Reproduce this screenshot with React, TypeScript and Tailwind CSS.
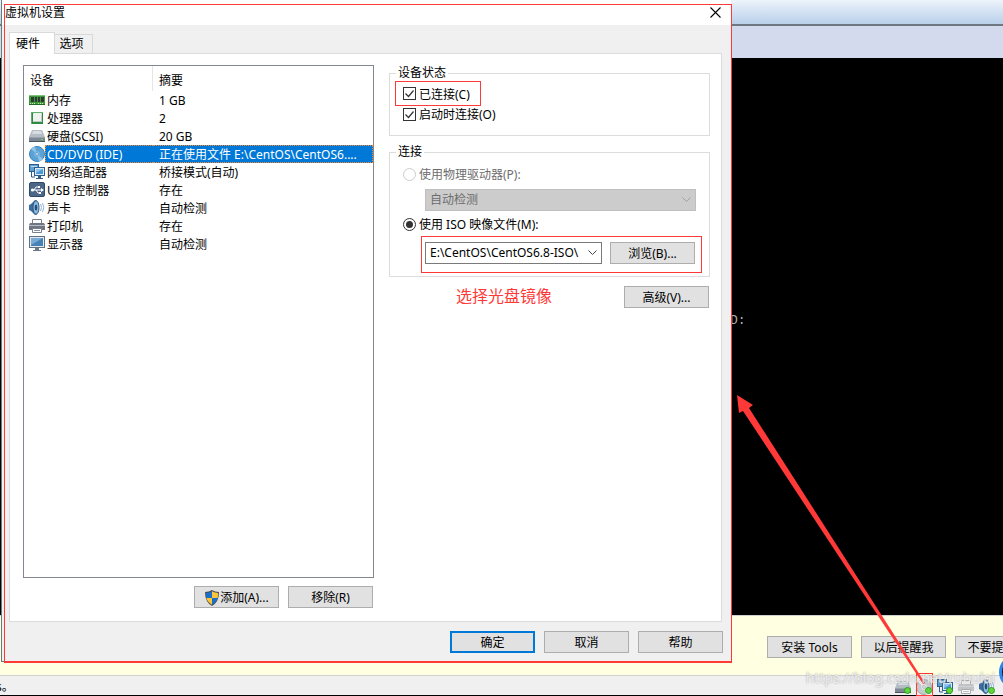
import type { ComponentType, ReactNode } from "react";
import clsx from "clsx";

function MemoryIcon() {
    return (
        <svg viewBox="0 0 16 16" className="size-4 shrink-0">
            <path d="M0 3h16v9H0z" fill="#3f9a3c" />
            <path d="M0 3h16v1H0z" fill="#7cc277" />
            <path d="M2 5h3v5H2zM6 5h2v5H6zM9 5h2v5H9zM12 5h3v5h-3z" fill="#2e3a33" />
            <path d="M0 12h16v1H0z" fill="#1f6a26" />
            <path d="M1 11h1v1H1zM3 11h1v1H3zM5 11h1v1H5zM9 11h1v1H9zM11 11h1v1h-1zM13 11h1v1h-1z" fill="#d9e8b0" />
        </svg>
    );
}

function CpuIcon() {
    return (
        <svg viewBox="0 0 16 16" className="size-4 shrink-0">
            <rect x="2" y="2" width="12" height="12" fill="#2f8a46" />
            <path d="M2 2h12v1H3v11H2z" fill="#5cb06c" />
            <rect x="4" y="3" width="9" height="9" rx="1" fill="#f0f2f0" />
            <path d="M5 12h7l1-1V5l-1-1v7H4z" fill="#c3cbc4" />
        </svg>
    );
}

function DiskIcon() {
    return (
        <svg viewBox="0 0 16 16" className="size-4 shrink-0">
            <path d="M3 2h10l3 7H0z" fill="#b4bcc5" />
            <path d="M4 3h8l1 3H3z" fill="#d6dce2" />
            <path d="M0 9h16v4H0z" fill="#7d8894" />
            <path d="M0 9h16v1H0z" fill="#98a3ae" />
            <path d="M0 13h16v1H0z" fill="#4b5662" />
            <path d="M12 11h2v1h-2z" fill="#6fdc4c" />
        </svg>
    );
}

function CdIcon({ gray = false }: { gray?: boolean }) {
    return (
        <svg viewBox="0 0 16 16" className="size-4 shrink-0">
            <circle cx="8" cy="8" r="7.5" fill={gray ? "#c6cacd" : "#5ba3d6"} stroke={gray ? "#a3a8ac" : "#3c83bb"} />
            <path d="M8 8L2 3a8 8 0 0 1 4-2.500zM8 8l6 5a8 8 0 0 1-4 2.500z" fill={gray ? "#f1f3f4" : "#8fc4e8"} />
            <circle cx="8" cy="8" r="3" fill={gray ? "#dfe2e4" : "#79b5df"} />
            <circle cx="8" cy="8" r="1.3" fill="#fff" stroke={gray ? "#8d9296" : "#3c83bb"} strokeWidth=".6" />
        </svg>
    );
}

function NetworkIcon() {
    return (
        <svg viewBox="0 0 16 16" className="size-4 shrink-0">
            <rect x="0.5" y="0.5" width="9" height="7" fill="#5d9fd0" stroke="#2c5f8d" />
            <path d="M2 2h6v1H2z" fill="#b6dbf3" />
            <path d="M2.500 8v5H6" fill="none" stroke="#2c5f8d" />
            <rect x="5.500" y="3.500" width="10" height="8" fill="#dce9f3" stroke="#2c5f8d" />
            <rect x="7" y="5" width="7" height="5" fill="#4b9ad8" />
            <path d="M7 5h7L7 9z" fill="#8cc5ee" />
            <path d="M9 12h3v2h2v1H7v-1h2z" fill="#315d86" />
        </svg>
    );
}

function UsbIcon() {
    return (
        <svg viewBox="0 0 16 16" className="size-4 shrink-0">
            <rect x="0.5" y="0.5" width="15" height="14" rx="1.500" fill="#4c6687" stroke="#304967" />
            <path d="M3 8h10M5 8l2-3h2M7 8l2 3h2" fill="none" stroke="#fff" strokeWidth="1" />
            <circle cx="3.500" cy="8" r="1.600" fill="#fff" />
            <path d="M12 6l3 2-3 2zM9 4h2v2H9zM10 10h2v2h-2z" fill="#fff" />
        </svg>
    );
}

function SoundIcon() {
    return (
        <svg viewBox="0 0 16 16" className="size-4 shrink-0">
            <path d="M0 5l2-1 4-4 2 1v13l-2 1-4-4-2-1z" fill="#3b6e9e" />
            <ellipse cx="7" cy="7.500" rx="3" ry="6.800" fill="#8dbbe0" stroke="#29557f" />
            <ellipse cx="7" cy="7.500" rx="1.300" ry="3" fill="#274c70" />
            <path d="M11.500 4q2 3.500 0 7M13.500 3q2.500 4.500 0 9" fill="none" stroke="#8fb3d2" />
        </svg>
    );
}

function PrinterIcon({ gray = false }: { gray?: boolean }) {
    return (
        <svg viewBox="0 0 16 16" className={clsx("size-4 shrink-0", gray && "opacity-60")}>
            <path d="M3.500 1.500h9v5h-9z" fill="#fff" stroke="#7b8088" />
            <path d="M1 5h14l1 2v5H0V7z" fill={gray ? "#a3a6aa" : "#6f7785"} />
            <path d="M0 7h16v1H0z" fill="#b9bec6" />
            <path d="M3.500 10.500h9v4h-9z" fill="#fff" stroke="#7b8088" />
            <path d="M5 12h6v1H5z" fill={gray ? "#a3a6aa" : "#8690b8"} />
        </svg>
    );
}

function DisplayIcon() {
    return (
        <svg viewBox="0 0 16 16" className="size-4 shrink-0">
            <rect x="0.5" y="0.5" width="15" height="11" fill="#e3e9ee" stroke="#60707f" />
            <rect x="2" y="2" width="12" height="8" fill="#4681b5" />
            <path d="M2 2h12L2 9z" fill="#77aad5" />
            <path d="M6 12h4v2h2v1H4v-1h2z" fill="#6b7a88" />
        </svg>
    );
}

function ShieldIcon() {
    return (
        <svg viewBox="0 0 16 16" className="size-4 shrink-0">
            <path d="M8 0q3 2 7 2 0 10-7 14Q1 12 1 2q4 0 7-2z" fill="#4a4f57" />
            <path d="M8 1.300V8H2.300Q2 6 2 3q3 0 6-1.700z" fill="#1c6fc9" />
            <path d="M8 1.300V8h5.700Q14 6 14 3q-3 0-6-1.700z" fill="#fcc43a" />
            <path d="M8 8v6.800Q3.500 12 2.300 8z" fill="#fcc43a" />
            <path d="M8 8v6.800q4.500-2.800 5.700-6.800z" fill="#1c6fc9" />
        </svg>
    );
}

interface Device {
    name: string;
    summary: string;
    icon: ComponentType;
    selected?: boolean;
}

const devices: Device[] = [
    { name: "内存", summary: "1 GB", icon: MemoryIcon },
    { name: "处理器", summary: "2", icon: CpuIcon },
    { name: "硬盘(SCSI)", summary: "20 GB", icon: DiskIcon },
    { name: "CD/DVD (IDE)", summary: "正在使用文件 E:\\CentOS\\CentOS6....", icon: CdIcon, selected: true },
    { name: "网络适配器", summary: "桥接模式(自动)", icon: NetworkIcon },
    { name: "USB 控制器", summary: "存在", icon: UsbIcon },
    { name: "声卡", summary: "自动检测", icon: SoundIcon },
    { name: "打印机", summary: "存在", icon: PrinterIcon },
    { name: "显示器", summary: "自动检测", icon: DisplayIcon },
];

function Button({ children, primary = false }: { children: ReactNode; primary?: boolean }) {
    return (
        <button
            type="button"
            className={clsx(
                "flex h-[22px] w-[85px] shrink-0 items-center justify-center whitespace-nowrap bg-[#e1e1e1] pt-[2px]",
                primary ? "border-2 border-[#0078d7]" : "border border-[#adadad]",
            )}
        >
            {children}
        </button>
    );
}

function CheckBox({ label, className }: { label: string; className?: string }) {
    return (
        <label className={clsx("flex items-center gap-[3px]", className)}>
            <span className="grid size-[13px] place-items-center">
                <input
                    type="checkbox"
                    defaultChecked
                    className="peer col-start-1 row-start-1 size-[13px] appearance-none border border-[#333] bg-white"
                />
                <svg
                    viewBox="0 0 13 13"
                    className="pointer-events-none invisible col-start-1 row-start-1 size-[13px] peer-checked:visible"
                >
                    <path d="M2.500 6.500l3 3 5-6" fill="none" stroke="#333" strokeWidth="1.200" />
                </svg>
            </span>
            <span className="pt-[2px]">{label}</span>
        </label>
    );
}

function Radio({ label, checked, disabled }: { label: string; checked?: boolean; disabled?: boolean }) {
    return (
        <label className={clsx("flex h-4 items-center gap-[3px] pl-[13px]", disabled && "text-[#6d6d6d]")}>
            <input
                type="radio"
                name="source"
                defaultChecked={checked}
                disabled={disabled}
                className="size-[13px] appearance-none rounded-full border border-[#333] bg-white bg-clip-content p-[2px] checked:bg-[#333] disabled:border-[#ccc]"
            />
            <span className="pt-[2px]">{label}</span>
        </label>
    );
}

function Select({ value, label, disabled, className }: { value: string; label: string; disabled?: boolean; className?: string }) {
    return (
        <div
            className={clsx(
                "grid h-[22px] items-center border",
                disabled ? "border-[#bfbfbf] bg-[#ccc] text-[#6d6d6d]" : "border-[#7a7a7a] bg-white",
                className,
            )}
        >
            <select
                aria-label={label}
                disabled={disabled}
                className="col-start-1 row-start-1 h-5 w-full appearance-none bg-transparent pr-4 pl-1 opacity-100"
            >
                <option>{value}</option>
            </select>
            <svg
                viewBox="0 0 9 6"
                className="pointer-events-none col-start-1 row-start-1 mr-1 h-[6px] w-[9px] justify-self-end"
            >
                <path d="M.5 .5l4 4 4-4" fill="none" stroke={disabled ? "#a0a0a0" : "#444"} />
            </svg>
        </div>
    );
}

function DeviceTable() {
    return (
        <div className="h-[513px] border border-[#828790] bg-white">
            <table className="w-full table-fixed border-separate border-spacing-0 text-left">
                <thead>
                    <tr className="h-[25px]">
                        <th className="w-[129px] border-r border-[#e5e5e5] p-0 pt-1 pl-[6px] font-normal">设备</th>
                        <th className="p-0 pt-1 pl-[6px] font-normal">摘要</th>
                    </tr>
                </thead>
                <tbody>
                    {devices.map(({ name, summary, icon: Icon, selected }) => (
                        <tr key={name} className="h-[18px]">
                            <td className="p-0">
                                <div className="flex h-[18px] items-center pl-[5px]">
                                    <Icon />
                                    <span
                                        className={clsx(
                                            "h-[18px] flex-1 border-y border-l border-dotted pl-px leading-[18px] whitespace-nowrap",
                                            selected ? "border-[#ff8728] bg-[#0078d7] text-white" : "border-transparent",
                                        )}
                                    >
                                        {name}
                                    </span>
                                </div>
                            </td>
                            <td className="p-0">
                                <div
                                    className={clsx(
                                        "h-[18px] overflow-hidden border-y border-r border-dotted pl-[6px] leading-[18px] whitespace-nowrap",
                                        selected ? "border-[#ff8728] bg-[#0078d7] text-white" : "border-transparent",
                                    )}
                                >
                                    {summary}
                                </div>
                            </td>
                        </tr>
                    ))}
                </tbody>
            </table>
        </div>
    );
}

function SettingsDialog() {
    return (
        <section className="absolute top-0 left-px w-[730px] border-b border-l border-[#6b7b78] bg-[#f0f0f0]">
            <header className="flex h-[25px] items-center justify-between bg-white pr-[10px] pl-[3px]">
                <h1>虚拟机设置</h1>
                <button type="button" aria-label="关闭">
                    <svg viewBox="0 0 11 11" className="size-[11px]">
                        <path d="M.5 .5l10 10M10.500 .5l-10 10" stroke="#000" strokeWidth="1.100" />
                    </svg>
                </button>
            </header>

            <div className="pt-[7px] pr-[9px] pl-[7px]">
                <nav className="-mb-px flex items-end">
                    <button type="button" className="relative h-[22px] w-[46px] border border-b-0 border-[#d9d9d9] bg-white pr-2">
                        硬件
                    </button>
                    <button type="button" className="h-5 w-[38px] border border-l-0 border-[#d9d9d9] pr-1">
                        选项
                    </button>
                </nav>

                <div className="flex gap-[15px] border border-[#dcdcdc] bg-white pt-[11px] pr-[11px] pb-[13px] pl-[13px]">
                    <div className="w-[351px]">
                        <DeviceTable />
                        <div className="mt-2 flex justify-end gap-[9px] pr-px">
                            <Button>
                                <ShieldIcon />
                                添加(A)...
                            </Button>
                            <Button>移除(R)</Button>
                        </div>
                    </div>

                    <div className="min-w-0 flex-1">
                        <fieldset className="border border-[#dcdcdc] pb-[13px]">
                            <legend className="ml-[6px] h-4 px-[2px] leading-4">设备状态</legend>
                            <CheckBox label="已连接(C)" className="ml-[5px] h-[25px] w-[86px] border border-[#ff3838] pl-[7px]" />
                            <CheckBox label="启动时连接(O)" className="ml-[13px] h-4" />
                        </fieldset>

                        <fieldset className="mt-2 border border-[#dcdcdc] pb-[3px]">
                            <legend className="ml-[6px] h-4 px-[2px] leading-4">连接</legend>
                            <div className="pt-[6px]">
                                <Radio label="使用物理驱动器(P):" disabled />
                            </div>
                            <Select label="物理驱动器" value="自动检测" disabled className="mt-[7px] mr-[13px] mb-[5px] ml-[35px]" />
                            <Radio label="使用 ISO 映像文件(M):" checked />
                            <div className="mt-1 mr-[7px] ml-[31px] flex h-[37px] items-center gap-2 border border-[#ff3838] pr-[6px] pb-[3px] pl-[3px]">
                                <Select label="ISO 映像文件" value="E:\CentOS\CentOS6.8-ISO\" className="min-w-0 flex-1" />
                                <Button>浏览(B)...</Button>
                            </div>
                        </fieldset>

                        <div className="mt-[9px] flex justify-between pr-px pl-[67px]">
                            <p className="text-base leading-5 text-[#ff3838]">选择光盘镜像</p>
                            <Button>高级(V)...</Button>
                        </div>
                    </div>
                </div>
            </div>

            <footer className="flex justify-end gap-[9px] pt-[9px] pr-2 pb-2">
                <Button primary>确定</Button>
                <Button>取消</Button>
                <Button>帮助</Button>
            </footer>
        </section>
    );
}

const statusIcons = [
    { id: "disk", icon: <DiskIcon />, active: true },
    { id: "cd", icon: <CdIcon gray />, active: true },
    { id: "network", icon: <NetworkIcon />, active: true },
    { id: "printer", icon: <PrinterIcon gray />, active: false },
    { id: "sound", icon: <SoundIcon />, active: true },
];

function VirtualMachine() {
    return (
        <main className="flex min-h-screen flex-col">
            <div className="h-[26px] border-b-2 border-[#6e7880] bg-linear-to-b from-[#edf3fb] to-[#b9d0ea]" />
            <div className="h-8 bg-[#d4daee]" />
            <div className="flex-1 bg-black pt-[255px] pl-[730px] font-['Liberation_Mono'] text-[13px] leading-4 text-[#b0b0b0]">
                D:
            </div>
            <div className="flex h-[60px] justify-end gap-[9px] overflow-hidden border-t border-[#d0d0d0] bg-[#ffffe1] pt-5">
                <Button>安装 Tools</Button>
                <Button>以后提醒我</Button>
                <div className="w-12">
                    <Button>不要提醒我</Button>
                </div>
            </div>
            <footer className="flex h-[21px] items-center justify-between border-t border-b border-t-[#d0d0d0] border-b-black bg-[#f0f0f0] pr-2">
                <span className="-ml-1 pt-[2px]">s。</span>
                <div className="flex gap-[5px] pt-[2px]">
                    {statusIcons.map(({ id, icon, active }) => (
                        <span key={id} className="relative">
                            {icon}
                            {active && (
                                <i className="absolute right-0 bottom-px size-[7px] rounded-full border border-[#2f9f1e] bg-[#5fd63c]" />
                            )}
                        </span>
                    ))}
                </div>
            </footer>
        </main>
    );
}

export default function App() {
    return (
        <div className="relative overflow-hidden font-['Noto_Sans','Noto_Sans_CJK_SC',sans-serif] text-xs text-black">
            <VirtualMachine />
            <SettingsDialog />

            {/* red mark-up drawn over the windows */}
            <div className="pointer-events-none absolute top-1 left-1 h-[659px] w-[728px] border border-b-2 border-[#ff3838]" />
            <div className="pointer-events-none absolute right-[70px] bottom-0 h-[23px] w-[17px] border border-[#ff3838]" />
            <svg viewBox="0 0 200 300" className="pointer-events-none absolute top-[390px] left-[732px] h-[300px] w-[200px]">
                <path d="M5 5l16 10-4 3L193 293l-2 1L11 21l-4 2z" fill="#ff3838" />
            </svg>
            <svg viewBox="0 0 4 36" className="pointer-events-none absolute right-0 bottom-[6px] h-9 w-1">
                <circle cx="18" cy="18" r="16.500" fill="#12202e" stroke="#2a86f0" strokeWidth="3" />
            </svg>
            <p className="pointer-events-none absolute right-[8px] bottom-[8px] text-sm leading-5 text-white/70 [text-shadow:0_0_2px_#999]">
                https://blog.csdn.net/rubulai
            </p>
        </div>
    );
}
